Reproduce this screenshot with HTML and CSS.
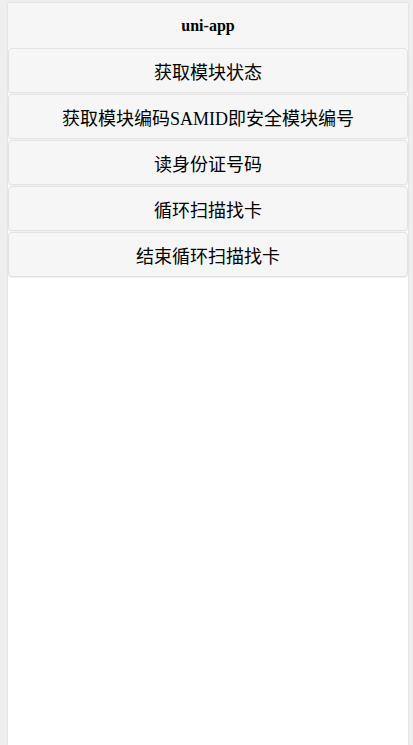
FILE: index.html
```html
<!DOCTYPE html>
<html lang="zh-CN">
<head>
<meta charset="UTF-8">
<meta name="viewport" content="width=device-width, initial-scale=1.0">
<title>uni-app</title>
<link rel="stylesheet" href="styles.css">
</head>
<body>

<div class="page">
    <div class="title">uni-app</div>
    <div class="buttons">
        <button class="btn">获取模块状态</button>
        <button class="btn">获取模块编码<span class="latin">SAMID</span>即安全模块编号</button>
        <button class="btn">读身份证号码</button>
        <button class="btn">循环扫描找卡</button>
        <button class="btn">结束循环扫描找卡</button>
    </div>
</div>

</body>
</html>
```
FILE: styles.css
```css
html, body {
    height: 100%;
}

body {
    margin: 0;
    padding: 3px 5px 0 8px;
    box-sizing: border-box;
    background-color: #efefef;
    font-family: "Liberation Serif", "Noto Sans CJK SC", serif;
    color: #000;
}

.page {
    height: 100%;
    background-color: #fff;
    box-shadow: 0 0 2px rgba(0, 0, 0, 0.12);
}

.title {
    height: 45px;
    line-height: 45px;
    text-align: center;
    font-weight: bold;
    font-size: 16px;
    background-color: #f6f6f6;
}

.buttons {
    display: flex;
    flex-direction: column;
    gap: 1px;
}

.btn {
    display: block;
    width: 100%;
    height: 45px;
    margin: 0;
    padding: 0;
    font-family: "Liberation Serif", "Noto Sans CJK SC", serif;
    font-size: 18px;
    color: #000;
    background-color: #f6f6f6;
    border: 1px solid #e2e2e2;
    border-radius: 4px;
    box-shadow: 0 1px 1px rgba(0, 0, 0, 0.06);
}

.latin {
    font-family: "Liberation Serif", serif;
}
```
